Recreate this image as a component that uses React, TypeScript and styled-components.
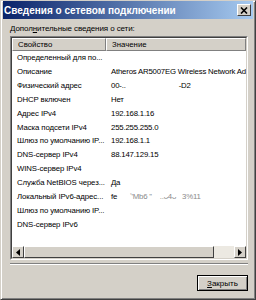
import React from 'react'
import styled, { createGlobalStyle } from 'styled-components'

const GlobalStyle = createGlobalStyle`
  html, body {
    margin: 0;
    padding: 0;
    background: #d4d0c8;
  }
  body {
    font-family: "Liberation Sans", Arial, sans-serif;
  }
`

const Window = styled.div`
  width: 256px;
  height: 300px;
  box-sizing: border-box;
  background: #d4d0c8;
  border: 1px solid #404040;
  border-top-color: #d4d0c8;
  border-left-color: #d4d0c8;
  box-shadow: inset 1px 1px 0 #ffffff, inset -1px -1px 0 #808080;
  display: flex;
  flex-direction: column;
  padding: 0 2px 2px 2px;
`

const TitleBar = styled.div`
  height: 18px;
  flex-shrink: 0;
  background: linear-gradient(to right, #0a246a, #a6caf0);
  display: flex;
  align-items: center;
  justify-content: space-between;
  padding: 0 2px 0 1px;
`

const Title = styled.span`
  color: #ffffff;
  font-weight: bold;
  font-size: 10px;
  white-space: nowrap;
`

const CloseButton = styled.div`
  width: 14px;
  height: 12px;
  box-sizing: border-box;
  background: #d4d0c8;
  border: 1px solid;
  border-color: #ffffff #404040 #404040 #ffffff;
  display: flex;
  align-items: center;
  justify-content: center;
`

const Body = styled.div`
  flex: 1;
  display: flex;
  flex-direction: column;
  padding: 5px 5px 0 7px;
`

const Caption = styled.div`
  font-size: 8px;
  line-height: 10px;
  color: #000;
  margin-bottom: 2px;
  letter-spacing: -0.1px;
  white-space: nowrap;
`

const ListBox = styled.div`
  height: 224px;
  flex-shrink: 0;
  box-sizing: border-box;
  border: 1px solid;
  border-color: #808080 #ffffff #ffffff #808080;
  display: flex;
`

const ListInner = styled.div`
  flex: 1;
  border: 1px solid;
  border-color: #404040 #d4d0c8 #d4d0c8 #404040;
  background: #ffffff;
  display: flex;
  flex-direction: column;
  overflow: hidden;
`

const HeaderRow = styled.div`
  display: flex;
  height: 13px;
  flex-shrink: 0;
`

const HeaderCell = styled.div<{ $w?: number }>`
  ${(p) => (p.$w ? `width: ${p.$w}px;` : 'flex: 1;')}
  box-sizing: border-box;
  background: #d4d0c8;
  border: 1px solid;
  border-color: #ffffff #808080 #808080 #ffffff;
  font-size: 7.8px;
  line-height: 11px;
  padding-left: 5px;
  white-space: nowrap;
  overflow: hidden;
`

const Rows = styled.div`
  flex: 1;
`

const Row = styled.div`
  display: flex;
  height: 13.85px;
  align-items: center;
  font-size: 7.8px;
  white-space: pre;
`

const Cell = styled.div<{ $w?: number; $faint?: boolean }>`
  ${(p) => (p.$w ? `width: ${p.$w}px; letter-spacing: -0.1px;` : 'flex: 1; letter-spacing: -0.2px;')}
  padding-left: 5px;
  box-sizing: border-box;
  overflow: hidden;
  color: ${(p) => (p.$faint ? '#8a8a8a' : '#000')};
`

const HScroll = styled.div`
  height: 12px;
  flex-shrink: 0;
  display: flex;
  background: #ece9e2;
`

const ScrollArrow = styled.div`
  width: 12px;
  height: 12px;
  box-sizing: border-box;
  background: #d4d0c8;
  border: 1px solid;
  border-color: #ffffff #404040 #404040 #ffffff;
  display: flex;
  align-items: center;
  justify-content: center;
`

const Track = styled.div`
  flex: 1;
  display: flex;
`

const Thumb = styled.div`
  flex: 1;
  margin-right: 20px;
  box-sizing: border-box;
  background: #d4d0c8;
  border: 1px solid;
  border-color: #ffffff #404040 #404040 #ffffff;
`

const Separator = styled.div`
  height: 0;
  border-top: 1px solid #808080;
  border-bottom: 1px solid #ffffff;
  margin-top: 3px;
`

const Footer = styled.div`
  display: flex;
  justify-content: flex-end;
  padding-top: 10px;
`

const Button = styled.div`
  width: 51px;
  height: 16px;
  box-sizing: border-box;
  background: #d4d0c8;
  border: 1px solid #000;
  box-shadow: inset 1px 1px 0 #ffffff, inset -1px -1px 0 #808080;
  font-size: 8px;
  display: flex;
  align-items: center;
  justify-content: center;
`

const rows: [string, string][] = [
  ['Определенный для по...', ''],
  ['Описание', 'Atheros AR5007EG Wireless Network Adapter'],
  ['Физический адрес', '00-..                           -D2'],
  ['DHCP включен', 'Нет'],
  ['Адрес IPv4', '192.168.1.16'],
  ['Маска подсети IPv4', '255.255.255.0'],
  ['Шлюз по умолчанию IP...', '192.168.1.1'],
  ['DNS-сервер IPv4', '88.147.129.15'],
  ['WINS-сервер IPv4', ''],
  ['Служба NetBIOS через...', 'Да'],
  ['Локальный IPv6-адрес...', 'fe'],
  ['Шлюз по умолчанию IP...', ''],
  ['DNS-сервер IPv6', ''],
]

const COL = 94

export default function App() {
  return (
    <>
      <GlobalStyle />
      <Window>
        <TitleBar>
          <Title>Сведения о сетевом подключении</Title>
          <CloseButton>
            <svg width="8" height="7" viewBox="0 0 8 7">
              <path d="M1 0.5 L7 6.5 M7 0.5 L1 6.5" stroke="#000" strokeWidth="1.6" />
            </svg>
          </CloseButton>
        </TitleBar>
        <Body>
          <Caption>
            Допол<u>н</u>ительные сведения о сети:
          </Caption>
          <ListBox>
            <ListInner>
              <HeaderRow>
                <HeaderCell $w={COL}>Свойство</HeaderCell>
                <HeaderCell>Значение</HeaderCell>
              </HeaderRow>
              <Rows>
                {rows.map(([k, v], i) => (
                  <Row key={i}>
                    <Cell $w={COL}>{k}</Cell>
                    <Cell>
                      {v}
                      {i === 10 && <Cell as="span" $faint>{'    ʼ\'Mb6 \'\'    ..ᴗ4ᴗ   3%11'}</Cell>}
                    </Cell>
                  </Row>
                ))}
              </Rows>
              <HScroll>
                <ScrollArrow>
                  <svg width="4" height="7" viewBox="0 0 4 7">
                    <path d="M4 0 L0 3.5 L4 7 Z" fill="#000" />
                  </svg>
                </ScrollArrow>
                <Track>
                  <Thumb />
                </Track>
                <ScrollArrow>
                  <svg width="4" height="7" viewBox="0 0 4 7">
                    <path d="M0 0 L4 3.5 L0 7 Z" fill="#000" />
                  </svg>
                </ScrollArrow>
              </HScroll>
            </ListInner>
          </ListBox>
          <Separator />
          <Footer>
            <Button>
              <span>
                <u>З</u>акрыть
              </span>
            </Button>
          </Footer>
        </Body>
      </Window>
    </>
  )
}
